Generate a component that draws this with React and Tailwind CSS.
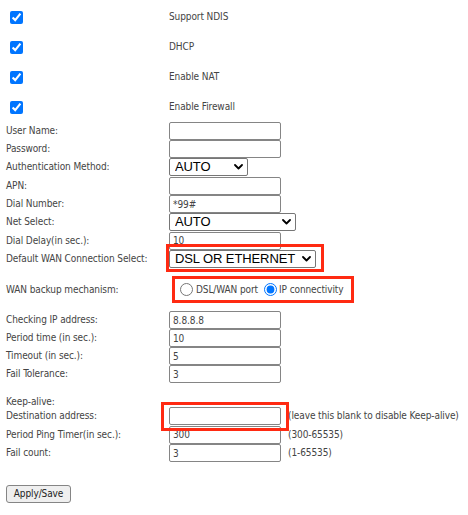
import React from "react";

const font = "font-['DejaVu_Sans_Condensed','DejaVu_Sans',sans-serif]";

const checks = ["Support NDIS", "DHCP", "Enable NAT", "Enable Firewall"];

function TextBox({ value = "" }) {
  return (
    <input
      type="text"
      defaultValue={value}
      className="box-border h-[18px] w-[112px] rounded-[2px] border border-[#858585] bg-white px-[3px] text-[10px] tracking-[-0.1px] text-[#444] outline-none"
    />
  );
}

function Select({ value, width }) {
  return (
    <span className="relative inline-flex">
      <select
        defaultValue={value}
        className={`box-border h-[18px] ${width} appearance-none rounded-[2px] border border-[#767676] bg-white pl-[5px] font-['Liberation_Sans',Arial,sans-serif] text-[13px] leading-[16px] text-black outline-none`}
      >
        <option>{value}</option>
      </select>
      <svg
        className="pointer-events-none absolute right-[5px] top-[6px]"
        width="9"
        height="6"
        viewBox="0 0 9 6"
      >
        <polyline points="1,1 4.5,4.5 8,1" fill="none" stroke="#000" strokeWidth="1.8" strokeLinecap="round" strokeLinejoin="round" />
      </svg>
    </span>
  );
}

function Row({ label, h = "h-[18px]", children }) {
  return (
    <div className={`grid grid-cols-[163px_1fr] items-center ${h}`}>
      <span>{label}</span>
      <div className="flex items-center gap-[7px]">{children}</div>
    </div>
  );
}

export default function App() {
  return (
    <div className={`${font} min-h-[515px] w-[468px] bg-white pl-[6px] pt-[2px] text-[10px] leading-[12px] tracking-[-0.1px] text-[#444]`}>
      {/* feature checkboxes */}
      {checks.map((c) => (
        <div key={c} className="grid h-[30px] grid-cols-[163px_1fr] items-center">
          <span className="pl-[4px]">
            <input type="checkbox" defaultChecked className="block h-[13px] w-[13px]" />
          </span>
          <span>{c}</span>
        </div>
      ))}

      <Row label="User Name:"><TextBox /></Row>
      <Row label="Password:"><TextBox /></Row>
      <Row label="Authentication Method:"><Select value="AUTO" width="w-[79px]" /></Row>
      <Row label="APN:" h="h-[19px]"><TextBox /></Row>
      <Row label="Dial Number:"><TextBox value="*99#" /></Row>
      <Row label="Net Select:"><Select value="AUTO" width="w-[127px]" /></Row>
      <Row label="Dial Delay(in sec.):" h="h-[19px]"><TextBox value="10" /></Row>
      <Row label="Default WAN Connection Select:">
        <span className="relative inline-flex">
          <Select value="DSL OR ETHERNET" width="w-[147px]" />
          <span className="pointer-events-none absolute left-[-3px] top-[-6px] h-[28px] w-[158px] border-[3px] border-[#ff2a12]" />
        </span>
      </Row>

      <Row label="WAN backup mechanism:" h="h-[43px]">
        <span className="ml-[3px] box-border flex h-[27px] w-[182px] items-center border-[3px] border-[#ff2a12] pl-[5px]">
          <input type="radio" name="bk" className="h-[13px] w-[13px]" />
          <span className="ml-[3px]">DSL/WAN port</span>
          <input type="radio" name="bk" defaultChecked className="ml-[6px] h-[13px] w-[13px]" />
          <span className="ml-[2px]">IP connectivity</span>
        </span>
      </Row>

      <Row label="Checking IP address:"><TextBox value="8.8.8.8" /></Row>
      <Row label="Period time (in sec.):"><TextBox value="10" /></Row>
      <Row label="Timeout (in sec.):"><TextBox value="5" /></Row>
      <Row label="Fail Tolerance:"><TextBox value="3" /></Row>

      <div className="h-[24px] pt-[13px]">Keep-alive:</div>
      <Row label="Destination address:">
        <span className="relative inline-flex">
          <TextBox />
          <span className="pointer-events-none absolute left-[-8px] top-[-5px] h-[29px] w-[128px] border-[3px] border-[#ff2a12]" />
        </span>
        <span>(leave this blank to disable Keep-alive)</span>
      </Row>
      <Row label="Period Ping Timer(in sec.):" h="h-[19px]">
        <TextBox value="300" />
        <span>(300-65535)</span>
      </Row>
      <Row label="Fail count:">
        <TextBox value="3" />
        <span>(1-65535)</span>
      </Row>

      <button
        type="button"
        className="mt-[23px] box-border h-[18px] w-[65px] rounded-[3px] border border-[#858585] bg-[#efefef] text-[10px] text-[#222]"
      >
        Apply/Save
      </button>
    </div>
  );
}
